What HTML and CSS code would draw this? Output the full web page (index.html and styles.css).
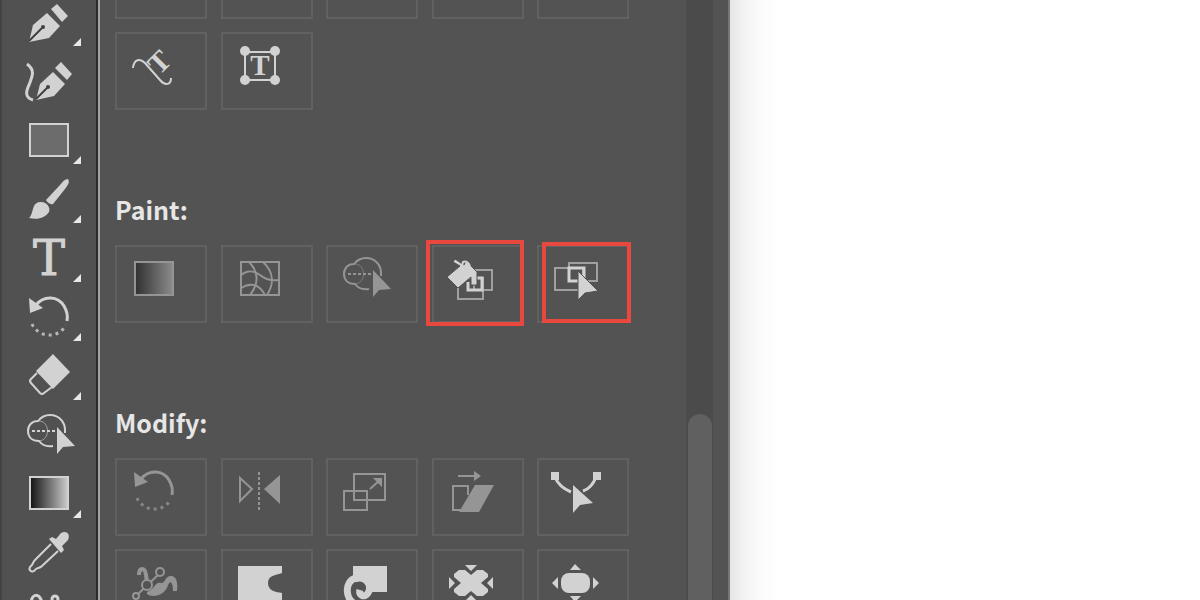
FILE: index.html
```
<!DOCTYPE html>
<html lang="en">
<head>
  <meta charset="utf-8">
  <title>All Tools</title>
  <link rel="stylesheet" href="styles.css">
</head>
<body>
  <!-- icons used in more than one place -->
  <svg class="sprite" aria-hidden="true">
    <defs>
      <linearGradient id="fade">
        <stop offset="0" stop-color="#111"/>
        <stop offset="1" stop-color="#ccc"/>
      </linearGradient>
      <linearGradient id="fade-dim">
        <stop offset="0" stop-color="#303030"/>
        <stop offset="1" stop-color="#8c8c8c"/>
      </linearGradient>
    </defs>
    <symbol id="rotate" viewBox="0 0 48 48">
      <path class="line thick" d="M11 12C19 2 33 3 39 13C42 18 43 23 42 28"/>
      <path class="fill" d="M4 5L18 15L5 20z"/>
      <path class="line thick dots" d="M7 31C12 43 32 48 41 32"/>
    </symbol>
    <symbol id="shape-builder" viewBox="0 0 52 48">
      <path class="line" d="M28 35C22 36 17 34 14 30C7 30 3 26 3 20C3 14 7 10 13 10C17 5 21 4 25 4C34 4 40 11 40 19L40 22"/>
      <path class="line thin soft" d="M13 10C25 9 26 29 14 30"/>
      <path class="line dash" d="M7 20H31"/>
      <path class="fill" d="M32 16V43L38 36L50 35z"/>
    </symbol>
  </svg>

  <div class="app">
    <nav class="toolbar" aria-label="Toolbar">
      <button class="tool more" aria-label="Pen">
        <svg viewBox="0 0 48 48">
          <path class="fill" d="M4 44L8 27L22 15L35 28L24 40z"/>
          <path class="fill" d="M32 6L43 18L37 24L26 11z"/>
          <path class="cut" d="M4 43L17 30"/>
          <circle class="hole" cx="18" cy="29" r="2"/>
        </svg>
      </button>
      <button class="tool" aria-label="Curvature">
        <svg viewBox="0 0 48 48">
          <path class="line thick" d="M2 7C10 13 8 18 4 28C0 36 1 41 8 43"/>
          <path class="fill" d="M11 43L15 27L28 15L40 27L29 39z"/>
          <path class="fill" d="M36 5L47 17L42 23L30 11z"/>
          <path class="cut" d="M11 42L22 31"/>
          <circle class="hole" cx="23" cy="30" r="2"/>
        </svg>
      </button>
      <button class="tool more" aria-label="Rectangle">
        <svg viewBox="0 0 48 48">
          <rect class="box" x="5" y="8" width="38" height="32"/>
        </svg>
      </button>
      <button class="tool more" aria-label="Paintbrush">
        <svg viewBox="0 0 48 48">
          <path class="fill" d="M43 4C45 7 43 10 40 14L28 29C25 30 22 27 21 25L35 10C38 6 40 4 43 4z"/>
          <path class="fill" d="M4 43C9 39 6 28 15 27C21 26 26 32 24 37C20 43 13 45 4 43z"/>
        </svg>
      </button>
      <button class="tool more" aria-label="Type">
        <svg viewBox="0 0 48 48">
          <text class="glyph large" x="24" y="41">T</text>
        </svg>
      </button>
      <button class="tool more" aria-label="Rotate">
        <svg><use href="#rotate"/></svg>
      </button>
      <button class="tool more" aria-label="Eraser">
        <svg viewBox="0 0 48 48">
          <path class="fill" d="M28 2L45 20L28 37L11 19z"/>
          <path class="line" d="M12 21L6 27Q4 29 6 31L15 41Q17 43 19 41L27 35"/>
        </svg>
      </button>
      <button class="tool" aria-label="Shape Builder">
        <svg class="wide"><use href="#shape-builder"/></svg>
      </button>
      <button class="tool more" aria-label="Gradient">
        <svg viewBox="0 0 48 48">
          <rect class="box fade" x="5" y="7" width="38" height="32"/>
        </svg>
      </button>
      <button class="tool" aria-label="Eyedropper">
        <svg viewBox="0 0 48 48">
          <path class="line" d="M26 15L10 31C7 34 9 35 5 38C3 42 8 44 10 41C12 38 14 40 17 37L33 22"/>
          <path class="fill" d="M24 10L27 8L31 10L36 4C41 1 46 5 43 11L37 17L39 21L36 24z"/>
        </svg>
      </button>
      <button class="tool" aria-label="Puppet Warp">
        <svg viewBox="0 0 48 48">
          <path class="line thick" d="M6 15C7 5 14 5 17 14"/>
          <circle class="line thick" cx="30" cy="11" r="3"/>
        </svg>
      </button>
    </nav>

    <main class="drawer">
      <div class="content">
        <section class="group">
          <div class="grid">
            <button class="cell" aria-label="Type"></button>
            <button class="cell" aria-label="Vertical Type"></button>
            <button class="cell" aria-label="Area Type"></button>
            <button class="cell" aria-label="Vertical Area Type"></button>
            <button class="cell" aria-label="Type on a Path"></button>
            <button class="cell" aria-label="Vertical Type on a Path">
              <svg viewBox="0 0 48 48">
                <path class="line" d="M3 27C4 18 10 17 15 22L30 39C35 45 41 44 41 37"/>
                <text class="glyph medium" x="36" y="28" transform="rotate(-45 36 28)">T</text>
              </svg>
            </button>
            <button class="cell" aria-label="Touch Type">
              <svg viewBox="0 0 48 48">
                <rect class="line" x="9" y="11" width="30" height="28"/>
                <circle class="fill" cx="9" cy="10" r="5"/>
                <circle class="fill" cx="39" cy="10" r="5"/>
                <circle class="fill" cx="9" cy="39" r="5"/>
                <circle class="fill" cx="39" cy="39" r="5"/>
                <text class="glyph medium" x="24" y="34">T</text>
              </svg>
            </button>
          </div>
        </section>

        <section class="group">
          <h2>Paint:</h2>
          <div class="grid">
            <button class="cell dim" aria-label="Gradient">
              <svg viewBox="0 0 48 48">
                <rect class="box fade-dim" x="5" y="8" width="38" height="33"/>
              </svg>
            </button>
            <button class="cell dim" aria-label="Mesh">
              <svg viewBox="0 0 48 48">
                <rect class="line" x="5" y="8" width="38" height="33"/>
                <path class="line" d="M5 21C12 15 18 17 24 21C30 26 36 27 43 26M5 34C15 28 23 30 29 41M13 8C23 18 23 30 14 41M27 8C38 18 38 30 31 41"/>
              </svg>
            </button>
            <button class="cell dim" aria-label="Shape Builder">
              <svg class="wide"><use href="#shape-builder"/></svg>
            </button>
            <button class="cell marked" aria-label="Live Paint Bucket">
              <svg viewBox="0 0 48 48">
                <rect class="line grey" x="27" y="16" width="18" height="20"/>
                <rect class="line grey" x="11" y="24" width="25" height="21"/>
                <path class="line thick" d="M29 24H35V36H21V28"/>
                <path class="fill outlined" d="M0 23L13 12L6 8L8 5L17 11L19 7L30 18V31H24V23L11 34z"/>
                <path class="line" d="M15 12L16 8Q20 6 23 12"/>
              </svg>
            </button>
            <button class="cell marked inner" aria-label="Live Paint Selection">
              <svg viewBox="0 0 48 48">
                <rect class="line grey" x="3" y="14" width="28" height="22"/>
                <rect class="line grey" x="17" y="9" width="28" height="18"/>
                <rect class="line thick" x="17" y="14" width="15" height="13"/>
                <path class="fill outlined" d="M26 17V46L33 39L46 37z"/>
              </svg>
            </button>
          </div>
        </section>

        <section class="group">
          <h2>Modify:</h2>
          <div class="grid">
            <button class="cell dim" aria-label="Rotate">
              <svg><use href="#rotate"/></svg>
            </button>
            <button class="cell dim" aria-label="Reflect">
              <svg viewBox="0 0 48 48">
                <path class="line" d="M4 11V34L16 22z"/>
                <path class="line dash" d="M23 5V43"/>
                <path class="fill" d="M44 8V37L28 22z"/>
              </svg>
            </button>
            <button class="cell dim" aria-label="Scale">
              <svg viewBox="0 0 48 48">
                <rect class="line" x="13" y="7" width="31" height="26"/>
                <rect class="line" x="3" y="24" width="23" height="19"/>
                <path class="line" d="M29 22L39 13"/>
                <path class="fill" d="M32 11H41V20z"/>
              </svg>
            </button>
            <button class="cell dim" aria-label="Shear">
              <svg viewBox="0 0 48 48">
                <path class="line" d="M11 9H29"/>
                <path class="fill" d="M27 4L34 9L27 14z"/>
                <path class="line" d="M14 43H6V19H21V28"/>
                <path class="fill" d="M28 18H47L32 45H12z"/>
              </svg>
            </button>
            <button class="cell" aria-label="Reshape">
              <svg viewBox="0 0 48 48">
                <path class="line thick" d="M3 10C6 18 12 22 19 25M44 10C41 18 37 22 31 24"/>
                <rect class="fill" x="-1" y="5" width="8" height="8"/>
                <rect class="fill" x="41" y="5" width="8" height="8"/>
                <path class="fill" d="M21 18V46L28 38L41 36z"/>
              </svg>
            </button>
            <button class="cell dim" aria-label="Puppet Warp">
              <svg viewBox="0 0 48 48">
                <path class="line heavy-horn" d="M9 17C9 9 15 9 16 17L17 24"/>
                <path class="fill" d="M17 34C26 30 25 23 31 25C35 26 35 17 42 18C47 19 48 26 47 33H43C43 26 41 21 38 27C36 36 24 41 17 36z"/>
                <path class="line" d="M8 36L28 17"/>
                <circle class="line knot" cx="30" cy="14" r="4"/>
                <circle class="line knot" cx="17" cy="27" r="5"/>
                <circle class="line knot" cx="6" cy="38" r="3"/>
              </svg>
            </button>
            <button class="cell" aria-label="Warp">
              <svg viewBox="0 0 48 48">
                <path class="fill" d="M2 8H46V15C41 17 32 17 32 25C32 33 40 34 46 35V44H2z"/>
              </svg>
            </button>
            <button class="cell" aria-label="Twirl">
              <svg viewBox="0 0 48 48">
                <path class="fill" d="M12 8H46V34H30C30 24 23 20 12 23z"/>
                <path class="line heavy" d="M15 20C3 23 4 41 14 46M14 21C24 17 32 27 27 35C24 40 17 38 19 32"/>
              </svg>
            </button>
            <button class="cell" aria-label="Pucker">
              <svg viewBox="0 0 48 48">
                <path class="fill" d="M7 16L12 12H18L24 17L30 12H36L41 16V19L34 25L41 31V34L36 38H30L24 33L18 38H12L7 34V31L14 25L7 19z"/>
                <path class="fill" d="M18 7H30L24 13zM18 43H30L24 37zM2 19V31L8 25zM46 19V31L40 25z"/>
              </svg>
            </button>
            <button class="cell" aria-label="Bloat">
              <svg viewBox="0 0 48 48">
                <rect class="fill" x="9" y="15" width="29" height="20" rx="8"/>
                <path class="fill" d="M18 12H29L23 6zM18 38H29L23 44zM6 19V31L0 25zM41 19V31L47 25z"/>
              </svg>
            </button>
          </div>
        </section>
      </div>
      <div class="track">
        <div class="thumb"></div>
      </div>
    </main>

    <div class="canvas"></div>
  </div>
</body>
</html>
```
FILE: styles.css
```
*,
*::after {
  margin: 0;
  padding: 0;
  box-sizing: border-box;
}

body {
  background: #fff;
  color: #e6e6e6;
  font-family: "Noto Sans CJK SC", "Open Sans", sans-serif;
}

button {
  background: none;
  border: none;
  color: #d2d2d2;
}

svg {
  display: block;
  width: 48px;
  height: 48px;
  overflow: visible;
}

svg.wide {
  width: 52px;
}

.sprite {
  position: absolute;
  width: 0;
  height: 0;
}

.app {
  display: flex;
  height: 100vh;
  overflow: hidden;
}

/* left toolbar */
.toolbar {
  flex: none;
  width: 98px;
  height: 100%;
  overflow: hidden;
  background: #515151;
  border-left: 2px solid #434343;
  border-right: 2px solid #2c2c2c;
}

.tool {
  display: block;
  position: relative;
  width: 100%;
  height: 59px;
  padding: 5px 23px;
}

.tool:first-child {
  margin-top: -8px;
}

.tool.more::after {
  content: '';
  position: absolute;
  right: 15px;
  bottom: 5px;
  width: 8px;
  height: 8px;
  background: #e8e8e8;
  clip-path: polygon(100% 0, 100% 100%, 0 100%);
}

/* tool drawer */
.drawer {
  flex: none;
  display: flex;
  width: 632px;
  height: 100%;
  overflow: hidden;
  background: #535353;
  border-left: 2px solid #a2a2a2;
  border-right: 2px solid #777;
  padding-right: 15px;
}

.content {
  flex: 1;
  margin-top: -59px;
  padding: 0 57px 0 15px;
}

.group + .group {
  padding-top: 87px;
}

h2 {
  font-size: 25px;
  line-height: 24px;
  margin-bottom: 24px;
}

.grid {
  display: grid;
  grid-template-columns: repeat(5, 92px);
  grid-auto-rows: 78px;
  justify-content: space-between;
  row-gap: 13px;
}

.cell {
  position: relative;
  border: 2px solid #616161;
  padding: 7px 13px;
  display: flex;
  align-items: flex-start;
}

.dim {
  color: #959595;
}

/* red highlight boxes */
.marked::after {
  content: '';
  position: absolute;
  top: -7px;
  left: -8px;
  width: 98px;
  height: 86px;
  border: 4px solid #e8483e;
}

.marked.inner::after {
  top: -5px;
  left: 3px;
  width: 89px;
  height: 81px;
}

.track {
  display: flex;
  flex-direction: column;
  justify-content: flex-end;
  width: 27px;
  padding: 0 1px 0 2px;
  background: #4b4b4b;
}

.thumb {
  height: 31%;
  background: #606060;
  border-radius: 12px 12px 0 0;
}

.canvas {
  flex: 1;
  background: linear-gradient(to right, #e6e6e6, #f3f3f3 14px, #fbfbfb 30px, #fff 50px);
}

/* icon parts */
.fill {
  fill: currentColor;
}

.line {
  fill: none;
  stroke: currentColor;
  stroke-width: 2px;
}

.thick {
  stroke-width: 3px;
}

.heavy {
  stroke-width: 7px;
}

.heavy-horn {
  stroke-width: 4px;
}

.thin {
  stroke-width: 1px;
}

.soft {
  opacity: 0.6;
}

.grey {
  stroke: #a0a0a0;
}

.dash {
  stroke-dasharray: 3 2;
}

.dots {
  stroke-dasharray: 3 4;
  opacity: 0.8;
}

.box {
  fill: #6c6c6c;
  stroke: currentColor;
  stroke-width: 2px;
}

.fade {
  fill: url(#fade);
}

.fade-dim {
  fill: url(#fade-dim);
}

.cut {
  stroke: #404040;
  stroke-width: 2px;
}

.hole {
  fill: #404040;
}

.knot {
  fill: #535353;
}

.outlined {
  stroke: #535353;
  stroke-width: 1px;
}

.glyph {
  fill: currentColor;
  stroke: currentColor;
  text-anchor: middle;
}

.large {
  font: 48px "DejaVu Serif", serif;
  stroke-width: 1px;
}

.medium {
  font: bold 29px "Liberation Serif", serif;
  stroke-width: 0;
}
```
